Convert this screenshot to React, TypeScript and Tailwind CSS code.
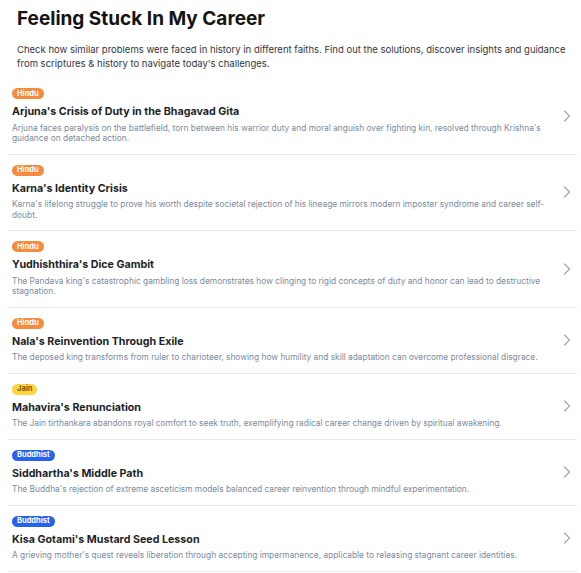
import React from 'react';
import { ChevronRight } from 'lucide-react';

type Faith = 'Hindu' | 'Jain' | 'Buddhist';

interface Story {
  faith: Faith;
  title: string;
  summary: string;
}

const stories: Story[] = [
  {
    faith: 'Hindu',
    title: "Arjuna's Crisis of Duty in the Bhagavad Gita",
    summary:
      "Arjuna faces paralysis on the battlefield, torn between his warrior duty and moral anguish over fighting kin, resolved through Krishna's guidance on detached action.",
  },
  {
    faith: 'Hindu',
    title: "Karna's Identity Crisis",
    summary:
      "Karna's lifelong struggle to prove his worth despite societal rejection of his lineage mirrors modern imposter syndrome and career self-doubt.",
  },
  {
    faith: 'Hindu',
    title: "Yudhishthira's Dice Gambit",
    summary:
      "The Pandava king's catastrophic gambling loss demonstrates how clinging to rigid concepts of duty and honor can lead to destructive stagnation.",
  },
  {
    faith: 'Hindu',
    title: "Nala's Reinvention Through Exile",
    summary:
      'The deposed king transforms from ruler to charioteer, showing how humility and skill adaptation can overcome professional disgrace.',
  },
  {
    faith: 'Jain',
    title: "Mahavira's Renunciation",
    summary:
      'The Jain tirthankara abandons royal comfort to seek truth, exemplifying radical career change driven by spiritual awakening.',
  },
  {
    faith: 'Buddhist',
    title: "Siddhartha's Middle Path",
    summary:
      "The Buddha's rejection of extreme asceticism models balanced career reinvention through mindful experimentation.",
  },
  {
    faith: 'Buddhist',
    title: "Kisa Gotami's Mustard Seed Lesson",
    summary:
      "A grieving mother's quest reveals liberation through accepting impermanence, applicable to releasing stagnant career identities.",
  },
];

const badgeStyles: Record<Faith, string> = {
  Hindu: 'bg-[#f58b3f] text-white',
  Jain: 'bg-[#fcd53f] text-[#7a5b0c]',
  Buddhist: 'bg-[#2563eb] text-white',
};

const StoryRow = ({ story, first }: { story: Story; first: boolean }) => (
  <div
    className={`flex items-center py-[10px] pl-1 cursor-pointer hover:bg-gray-50 ${
      first ? '' : 'border-t border-[#e8eaee]'
    }`}
  >
    <div className="flex-1 min-w-0 pr-[6px]">
      <div className="flex">
        <span
          className={`flex h-[11px] items-center rounded-full px-[5px] text-[7.5px] font-bold leading-none ${badgeStyles[story.faith]}`}
        >
          {story.faith}
        </span>
      </div>
      <h3 className="mt-[5px] text-[10.7px] leading-[16px] font-bold text-[#1c1f26]">{story.title}</h3>
      <p className="mt-[2.5px] text-[8.35px] leading-[10.5px] text-[#7b8ba0]">{story.summary}</p>
    </div>
    <ChevronRight size={20} strokeWidth={1.5} className="shrink-0 text-[#a3a8b0]" />
  </div>
);

export default function App() {
  return (
    <div className="min-h-screen bg-white font-['Inter','Liberation_Sans',sans-serif]">
      <header className="pl-[17px] pr-[9px] pt-[5px] pb-[7px]">
        <h1 className="text-[19px] leading-[28px] font-bold text-[#141414]">Feeling Stuck In My Career</h1>
        <p className="mt-[10px] text-[9.5px] leading-[14px] text-[#33363b]">
          Check how similar problems were faced in history in different faiths. Find out the solutions, discover
          insights and guidance from scriptures &amp; history to navigate today's challenges.
        </p>
      </header>
      <div className="ml-2 mr-1 border-b border-[#e8eaee]">
        {stories.map((s, i) => (
          <StoryRow key={s.title} story={s} first={i === 0} />
        ))}
      </div>
    </div>
  );
}
